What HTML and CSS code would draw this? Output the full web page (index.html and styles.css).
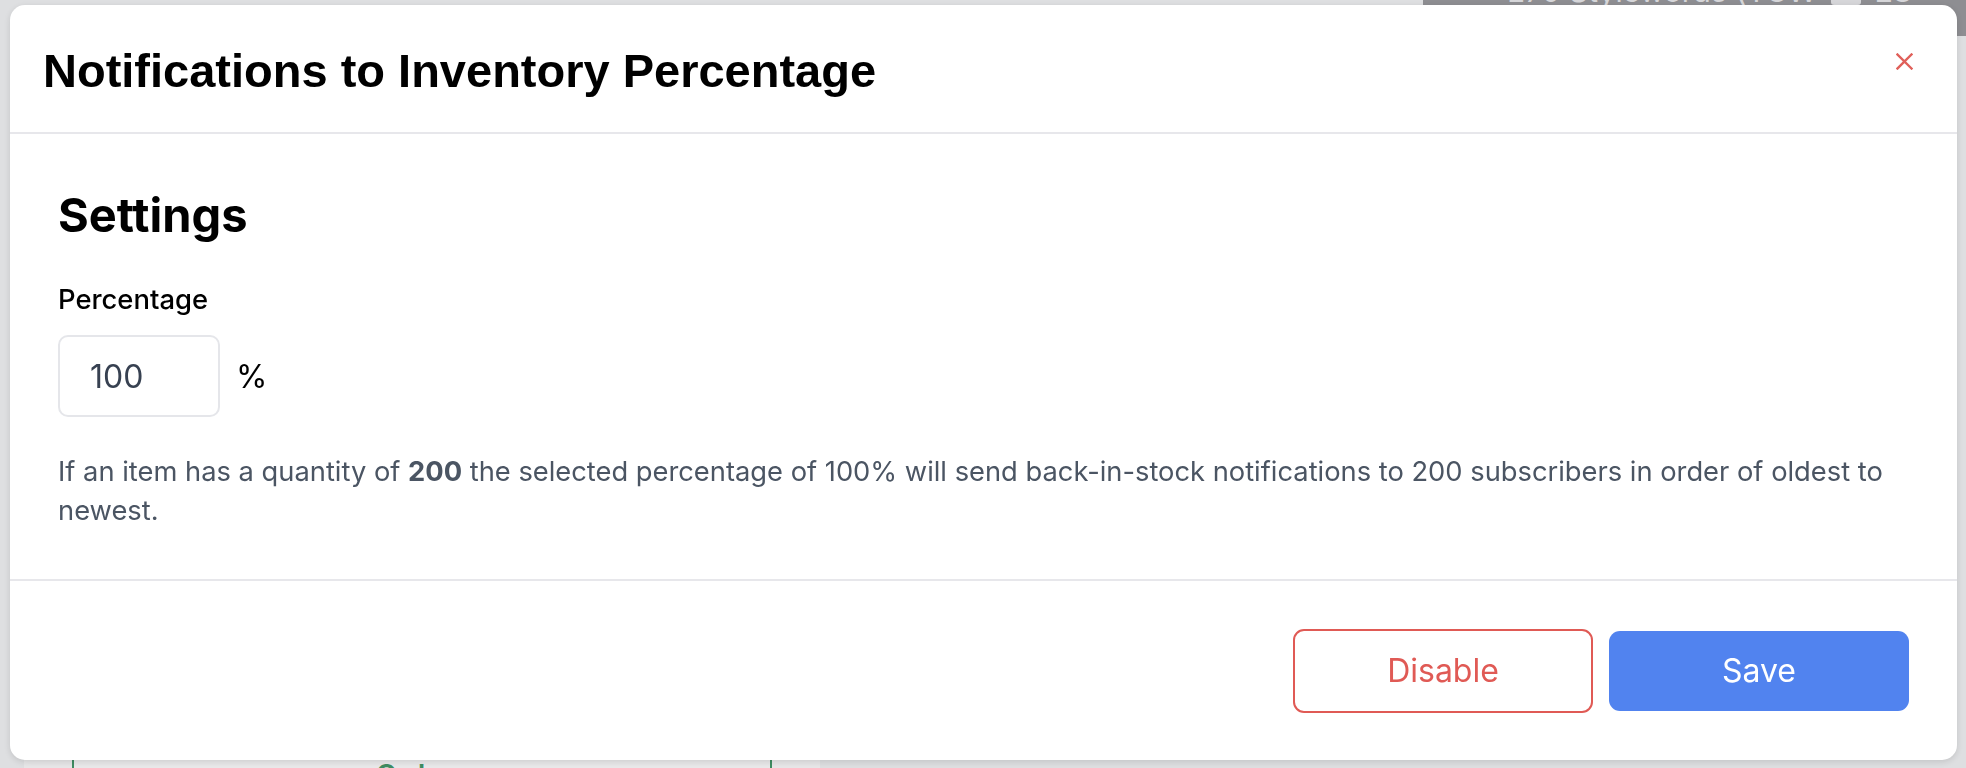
FILE: index.html
```html
<!DOCTYPE html>
<html lang="en">
<head>
<meta charset="utf-8">
<title>Notifications to Inventory Percentage</title>
<link rel="stylesheet" href="styles.css">
</head>
<body>
<div class="page">
  <div class="topbar">
    <div class="topbar-dark">
      <span class="store-name">E70 Stylewords (YCW</span>
      <span class="store-icon"></span>
      <span class="store-initials">LO</span>
    </div>
  </div>
  <div class="main">
    <div class="panel">
      <div class="card">
        <div class="card-title">Orders</div>
      </div>
    </div>
  </div>
</div>

<div class="modal" role="dialog" aria-labelledby="modal-title">
  <header class="modal-header">
    <h1 id="modal-title" class="modal-title">Notifications to Inventory Percentage</h1>
    <button class="close-btn" aria-label="Close">
      <svg width="17" height="17" viewBox="0 0 17 17" aria-hidden="true">
        <path d="M1.5 1.5 L15.5 15.5 M15.5 1.5 L1.5 15.5" stroke="#e0605a" stroke-width="2.4" stroke-linecap="square" fill="none"/>
      </svg>
    </button>
  </header>
  <section class="modal-body">
    <h2 class="section-title">Settings</h2>
    <label class="field-label" for="pct">Percentage</label>
    <div class="input-row">
      <input id="pct" class="pct-input" type="text" value="100">
      <span class="pct-suffix">%</span>
    </div>
    <p class="description"><span>If an item has a quantity of </span><strong>200</strong><span> the selected percentage of 100% will send back-in-stock notifications to 200 subscribers in order of oldest to</span> <span>newest.</span></p>
  </section>
  <footer class="modal-footer">
    <button class="btn btn-outline">Disable</button>
    <button class="btn btn-primary">Save</button>
  </footer>
</div>
</body>
</html>
```

FILE: styles.css
```css
* {
  box-sizing: border-box;
}

html, body {
  margin: 0;
  padding: 0;
  height: 100%;
}

body {
  background: #dedfe1;
  font-family: Inter, "Noto Sans", "Liberation Sans", sans-serif;
  overflow: hidden;
}

/* background page (under overlay) */
.page {
  height: 768px;
  display: flex;
  flex-direction: column;
  overflow: hidden;
}

.topbar {
  height: 36px;
  display: flex;
  justify-content: flex-end;
  flex-shrink: 0;
}

.topbar-dark {
  width: 543px;
  background: #8e8e92;
  display: flex;
  align-items: flex-start;
  gap: 14px;
  padding-left: 84px;
  color: #d6d6d9;
  font-size: 30px;
  line-height: 30px;
  overflow: hidden;
}

.store-name {
  margin-top: -24px;
}

.store-icon {
  width: 30px;
  height: 30px;
  margin-top: -25px;
  background: #d6d6d9;
  border-radius: 3px;
}

.store-initials {
  margin-top: -24px;
  font-weight: 700;
}

.main {
  flex: 1;
  display: flex;
  overflow: hidden;
}

.panel {
  margin-left: 24px;
  width: 796px;
  background: #e7e7e8;
  overflow: hidden;
}

.card {
  margin: 700px 0 0 48px;
  width: 700px;
  height: 32px;
  border-left: 2px solid #3f8d62;
  border-right: 2px solid #3f8d62;
  background: #e9e9ea;
  overflow: hidden;
}

.card-title {
  padding-top: 22px;
  text-align: center;
  color: #3f8d62;
  font-size: 28px;
  line-height: 34px;
  font-weight: 600;
}

/* modal */
.modal {
  position: fixed;
  left: 10px;
  top: 5px;
  width: 1947px;
  height: 755px;
  background: #ffffff;
  border-radius: 15px;
  box-shadow: 0 2px 6px rgba(0, 0, 0, 0.12);
  display: flex;
  flex-direction: column;
  overflow: hidden;
}

.modal-header {
  height: 129px;
  padding: 4px 44px 0 33px;
  display: flex;
  align-items: center;
  justify-content: space-between;
  border-bottom: 2px solid #e7e7eb;
  flex-shrink: 0;
}

.modal-title {
  margin: 0;
  font-family: "Liberation Sans", Arial, sans-serif;
  font-weight: 700;
  font-size: 47px;
  line-height: 1;
  color: #000;
}

.close-btn {
  align-self: flex-start;
  margin-top: 44px;
  padding: 0;
  border: 0;
  background: none;
  width: 17px;
  height: 17px;
  display: flex;
  cursor: pointer;
}

.modal-body {
  padding: 53px 48px 49px 48px;
  border-bottom: 2px solid #e7e7eb;
  flex-shrink: 0;
}

.section-title {
  margin: 0;
  font-size: 47px;
  font-weight: 700;
  line-height: 56px;
  color: #000;
}

.field-label {
  display: block;
  margin-top: 38px;
  font-size: 27.4px;
  font-weight: 500;
  line-height: 36px;
  color: #000;
}

.input-row {
  margin-top: 18px;
  display: flex;
  align-items: center;
  gap: 16px;
}

.pct-input {
  width: 162px;
  height: 82px;
  border: 2px solid #e5e6ea;
  border-radius: 10px;
  padding: 0 0 0 30px;
  font-family: Inter, "Noto Sans", sans-serif;
  font-size: 32px;
  color: #374151;
  background: #fff;
  outline: none;
}

.pct-suffix {
  font-size: 32px;
  color: #000;
}

.description {
  margin: 35px 0 0 0;
  font-size: 27.3px;
  line-height: 39px;
  color: #4b5563;
}

.description strong {
  font-weight: 700;
  color: #4b5563;
}

.modal-footer {
  flex: 1;
  display: flex;
  align-items: center;
  justify-content: flex-end;
  gap: 16px;
  padding: 0 48px;
}

.btn {
  width: 300px;
  font-family: Inter, "Noto Sans", sans-serif;
  font-size: 32px;
  font-weight: 400;
  border-radius: 11px;
  cursor: pointer;
  display: flex;
  align-items: center;
  justify-content: center;
}

.btn-outline {
  height: 84px;
  background: #fff;
  border: 2px solid #e05a55;
  color: #e05a55;
}

.btn-primary {
  height: 80px;
  background: #5183ef;
  border: 0;
  color: #fff;
}
```
